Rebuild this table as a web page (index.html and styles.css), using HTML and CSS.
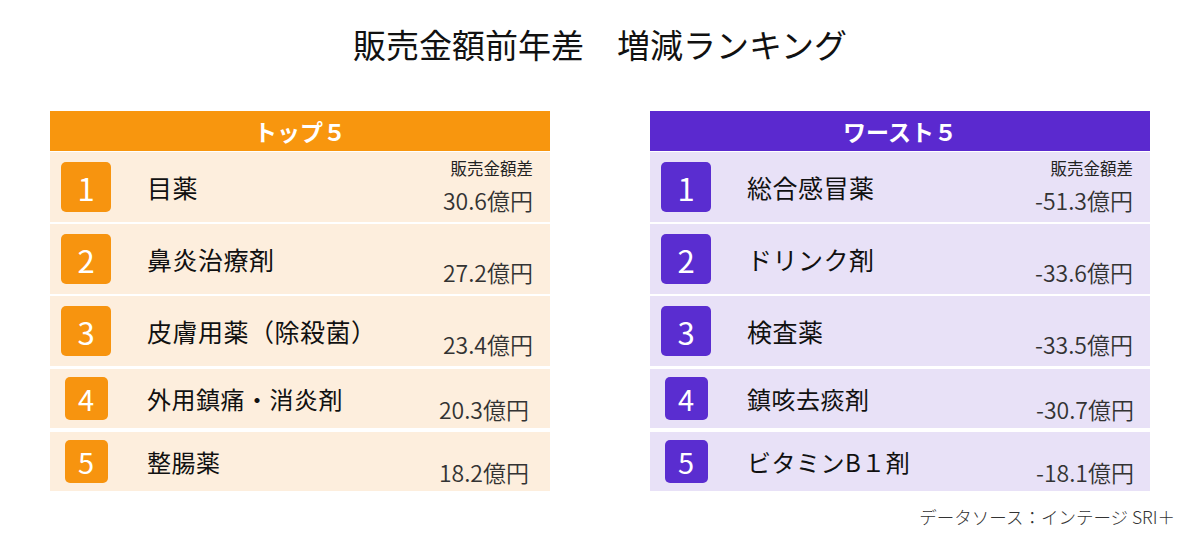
FILE: index.html
```html
<!DOCTYPE html>
<html lang="ja">
<head>
<meta charset="utf-8">
<title>販売金額前年差 増減ランキング</title>
<link rel="stylesheet" href="styles.css">
</head>
<body>
<h1 class="title">販売金額前年差　増減ランキング</h1>
<div class="panels">
  <section class="panel panel-best">
    <div class="panel-head">トップ５</div>
    <div class="row row-lg"><div class="badge">1</div><div class="name">目薬</div><div class="amount"><span class="label">販売金額差</span><span class="value">30.6億円</span></div></div>
    <div class="row row-lg"><div class="badge">2</div><div class="name">鼻炎治療剤</div><div class="amount"><span class="label"></span><span class="value">27.2億円</span></div></div>
    <div class="row row-lg row-3"><div class="badge">3</div><div class="name">皮膚用薬（除殺菌）</div><div class="amount"><span class="label"></span><span class="value">23.4億円</span></div></div>
    <div class="row row-sm"><div class="badge">4</div><div class="name">外用鎮痛・消炎剤</div><div class="amount"><span class="label"></span><span class="value">20.3億円</span></div></div>
    <div class="row row-sm"><div class="badge">5</div><div class="name">整腸薬</div><div class="amount"><span class="label"></span><span class="value">18.2億円</span></div></div>
  </section>
  <section class="panel panel-worst">
    <div class="panel-head">ワースト５</div>
    <div class="row row-lg"><div class="badge">1</div><div class="name">総合感冒薬</div><div class="amount"><span class="label">販売金額差</span><span class="value">-51.3億円</span></div></div>
    <div class="row row-lg"><div class="badge">2</div><div class="name">ドリンク剤</div><div class="amount"><span class="label"></span><span class="value">-33.6億円</span></div></div>
    <div class="row row-lg row-3"><div class="badge">3</div><div class="name">検査薬</div><div class="amount"><span class="label"></span><span class="value">-33.5億円</span></div></div>
    <div class="row row-sm"><div class="badge">4</div><div class="name">鎮咳去痰剤</div><div class="amount"><span class="label"></span><span class="value">-30.7億円</span></div></div>
    <div class="row row-sm"><div class="badge">5</div><div class="name">ビタミンB１剤</div><div class="amount"><span class="label"></span><span class="value">-18.1億円</span></div></div>
  </section>
</div>
<p class="source">データソース：インテージ SRI＋</p>
</body>
</html>
```
FILE: styles.css
```css
html, body {
  margin: 0;
  padding: 0;
  background: #ffffff;
}
body {
  width: 1200px;
  height: 548px;
  overflow: hidden;
  font-family: "Noto Sans CJK JP", "Noto Sans", sans-serif;
  color: #111;
}
.title {
  margin: 0;
  padding-top: 24px;
  font-size: 33px;
  line-height: 40px;
  font-weight: 400;
  text-align: center;
  color: #111;
}
.panels {
  display: flex;
  gap: 100px;
  padding-left: 50px;
  margin-top: 47px;
}
.panel {
  width: 500px;
  display: flex;
  flex-direction: column;
}
.panel-head {
  height: 40px;
  line-height: 40px;
  text-align: center;
  color: #fff;
  font-size: 23px;
  font-weight: 700;
  margin-bottom: 1px;
}
.panel-best .panel-head { background: #f8960e; }
.panel-worst .panel-head { background: #5b29cf; }
.row {
  display: grid;
  grid-template-columns: 72px 1fr auto;
  align-items: center;
}
.panel-best .row { background: #fdeedd; }
.panel-worst .row { background: #e8e1f7; }
.row-lg {
  height: 70px;
  margin-bottom: 2px;
}
.row-3 { margin-bottom: 3px; }
.row-sm {
  height: 59px;
  margin-bottom: 4px;
}
.badge {
  justify-self: center;
  width: 50px;
  height: 50px;
  border-radius: 5px;
  display: flex;
  align-items: center;
  justify-content: center;
  color: #fff;
  font-size: 31px;
  font-weight: 400;
  line-height: 1;
}
.row-sm .badge {
  width: 43px;
  height: 43px;
  font-size: 29px;
}
.panel-best .badge { background: #f7940f; }
.panel-worst .badge { background: #5a2dd0; }
.name {
  padding-left: 25px;
  font-size: 25px;
  line-height: 30px;
  letter-spacing: 0.5px;
  color: #111;
}
.row-sm .name {
  font-size: 24px;
}
.amount {
  align-self: stretch;
  display: flex;
  flex-direction: column;
  align-items: flex-end;
  padding-top: 6px;
  padding-right: 17px;
  color: #333;
}
.label {
  height: 20px;
  font-size: 16.5px;
  line-height: 20px;
  color: #222;
}
.value {
  margin-top: 9px;
  font-size: 23px;
  line-height: 26px;
  font-weight: 350;
  color: #333;
}
.row-sm .amount { padding-right: 21px; }
.panel-worst .row-sm .amount { padding-right: 16px; }
.row-sm .value { margin-top: 1px; }
.source {
  margin: 12px 0 0 0;
  padding-right: 25px;
  text-align: right;
  font-size: 17.5px;
  line-height: 20px;
  font-weight: 300;
  color: #333;
}
```
